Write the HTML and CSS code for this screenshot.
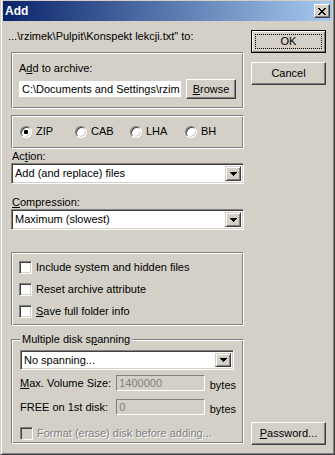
FILE: index.html
```html
<!DOCTYPE html>
<html lang="en">
<head>
  <meta charset="UTF-8">
  <title>Add</title>
  <link rel="stylesheet" href="styles.css">
</head>
<body>

  <div class="window">

    <div class="titlebar">
      <span class="title">Add</span>
      <span class="close">
        <svg width="8" height="7" viewBox="0 0 8 7" shape-rendering="crispEdges">
          <path d="M0 0h2v1h-2z M6 0h2v1h-2z M1 1h2v1h-2z M5 1h2v1h-2z M2 2h4v1h-4z M3 3h2v1h-2z M2 4h4v1h-4z M1 5h2v1h-2z M5 5h2v1h-2z M0 6h2v1h-2z M6 6h2v1h-2z" fill="#000"/>
        </svg>
      </span>
    </div>

    <div class="client">

      <div class="main">
        <div class="path">...\rzimek\Pulpit\Konspekt lekcji.txt" to:</div>

        <!-- Archive name -->
        <div class="group archive">
          <div>A<u>d</u>d to archive:</div>
          <div class="archive-row">
            <div class="edit">C:\Documents and Settings\rzim</div>
            <div class="button browse"><span><u>B</u>rowse</span></div>
          </div>
        </div>

        <!-- Archive type -->
        <div class="group formats">
          <div class="option"><span class="radio checked"></span>ZIP</div>
          <div class="option"><span class="radio"></span>CAB</div>
          <div class="option"><span class="radio"></span>LHA</div>
          <div class="option"><span class="radio"></span>BH</div>
        </div>

        <div class="field-label">Ac<u>t</u>ion:</div>
        <div class="combo">
          <span class="combo-text">Add (and replace) files</span>
          <span class="drop"><svg width="7" height="4" viewBox="0 0 7 4" shape-rendering="crispEdges"><path d="M0 0h7v1h-1v1h-1v1h-1v1h-1v-1h-1v-1h-1v-1h-1z" fill="#000"/></svg></span>
        </div>

        <div class="field-label compression-label"><u>C</u>ompression:</div>
        <div class="combo">
          <span class="combo-text">Maximum (slowest)</span>
          <span class="drop"><svg width="7" height="4" viewBox="0 0 7 4" shape-rendering="crispEdges"><path d="M0 0h7v1h-1v1h-1v1h-1v1h-1v-1h-1v-1h-1v-1h-1z" fill="#000"/></svg></span>
        </div>

        <!-- Options -->
        <div class="group flags">
          <div class="check-row"><span class="checkbox"></span>Include system and hidden files</div>
          <div class="check-row"><span class="checkbox"></span>Reset archive attribute</div>
          <div class="check-row"><span class="checkbox"></span><span><u>S</u>ave full folder info</span></div>
        </div>

        <!-- Disk spanning -->
        <div class="group spanning">
          <div class="legend">Multiple disk s<u>p</u>anning</div>
          <div class="combo small">
            <span class="combo-text">No spanning...</span>
            <span class="drop"><svg width="7" height="4" viewBox="0 0 7 4" shape-rendering="crispEdges"><path d="M0 0h7v1h-1v1h-1v1h-1v1h-1v-1h-1v-1h-1v-1h-1z" fill="#000"/></svg></span>
          </div>
          <div class="size-row first">
            <span class="size-label"><u>M</u>ax. Volume Size:</span>
            <span class="edit disabled">1400000</span>
            <span class="unit">bytes</span>
          </div>
          <div class="size-row">
            <span class="size-label">FREE on 1st disk:</span>
            <span class="edit disabled">0</span>
            <span class="unit">bytes</span>
          </div>
          <div class="check-row format">
            <span class="checkbox disabled"></span>
            <span class="disabled-text">Format (erase) disk before adding...</span>
          </div>
        </div>
      </div>

      <div class="side">
        <div class="button default"><span class="focus">OK</span></div>
        <div class="button cancel">Cancel</div>
        <div class="button password"><span><u>P</u>assword...</span></div>
      </div>

    </div>
  </div>

</body>
</html>
```

FILE: styles.css
```css
/* Reset */
* {
  margin: 0;
  padding: 0;
  box-sizing: border-box;
}

body {
  background: #d4d0c8;
  color: #000;
  font-family: 'Liberation Sans', Arial, sans-serif;
  font-size: 11px;
  line-height: 13px;
}

u {
  text-underline-offset: 1px;
}

/* Window frame */
.window {
  width: 335px;
  height: 455px;
  display: flex;
  flex-direction: column;
  padding: 1px 2px 2px 2px;
  border: 1px solid;
  border-top: 0;
  border-color: #d4d0c8 #404040 #404040 #d4d0c8;
  box-shadow: inset 1px 0 #fff, inset -1px -1px #808080;
}

.titlebar {
  height: 20px;
  flex-shrink: 0;
  display: flex;
  align-items: center;
  justify-content: space-between;
  padding: 0 2px;
  background: linear-gradient(to right, #0a246a, #a6caf0);
  color: #fff;
  font-weight: bold;
  font-size: 12px;
}

.close {
  width: 16px;
  height: 14px;
  display: flex;
  align-items: center;
  justify-content: center;
  background: #d4d0c8;
  border: 1px solid;
  border-color: #fff #404040 #404040 #fff;
  box-shadow: inset -1px -1px #808080;
}

.client {
  flex: 1;
  display: flex;
  padding: 9px 6px 7px 5px;
}

.main {
  width: 236px;
  display: flex;
  flex-direction: column;
}

.main > *,
.spanning > * {
  flex-shrink: 0;
}

.side {
  width: 75px;
  margin-left: 7px;
  display: flex;
  flex-direction: column;
}

/* Etched group boxes */
.group {
  width: 233px;
  margin-left: 3px;
  border: 1px solid;
  border-color: #808080 #fff #fff #808080;
  box-shadow: inset 1px 1px #fff, inset -1px -1px #808080;
}

.archive {
  margin-top: 9px;
  padding: 9px 4px 9px 7px;
}

.archive-row {
  display: flex;
  align-items: center;
  gap: 5px;
  margin-top: 4px;
}

.edit {
  width: 162px;
  height: 16px;
  line-height: 16px;
  padding-left: 3px;
  background: #fff;
  white-space: nowrap;
  overflow: hidden;
}

.edit.disabled {
  width: 90px;
  padding-left: 2px;
  line-height: 14px;
  background: #d4d0c8;
  color: #808080;
  border: 1px solid;
  border-color: #808080 #fff #fff #808080;
}

/* Push buttons */
.button {
  height: 23px;
  flex-shrink: 0;
  display: flex;
  align-items: center;
  justify-content: center;
  background: #d4d0c8;
  border: 1px solid;
  border-color: #fff #404040 #404040 #fff;
  box-shadow: inset -1px -1px #808080;
}

.browse {
  width: 50px;
  height: 20px;
}

.default {
  padding: 3px;
  border-color: #000;
  box-shadow: inset 1px 1px #fff, inset -1px -1px #808080;
}

.focus {
  width: 100%;
  height: 100%;
  display: flex;
  align-items: center;
  justify-content: center;
  border: 1px dotted #000;
}

.cancel {
  margin-top: 9px;
}

.password {
  margin-top: auto;
}

/* Radio buttons */
.formats {
  margin-top: 6px;
  padding: 9px 0 10px 8px;
  display: flex;
}

.option {
  width: 55px;
  height: 13px;
  display: flex;
  align-items: center;
  gap: 4px;
}

.radio {
  width: 12px;
  height: 12px;
  flex-shrink: 0;
  border-radius: 50%;
  background: #fff;
  border: 1px solid;
  border-color: #808080 #fff #fff #808080;
  box-shadow: inset 1px 1px #404040, inset -1px -1px #d4d0c8;
}

.radio.checked {
  background: radial-gradient(circle at center, #000 0 2px, #fff 2.5px);
}

/* Combo boxes */
.field-label {
  margin: 1px 0 0 4px;
}

.compression-label {
  margin-top: 12px;
}

.combo {
  width: 233px;
  height: 21px;
  margin-left: 3px;
  display: flex;
  align-items: center;
  padding: 2px;
  background: #fff;
  border: 1px solid;
  border-color: #808080 #fff #fff #808080;
  box-shadow: inset 1px 1px #404040, inset -1px -1px #d4d0c8;
}

.combo-text {
  flex: 1;
  padding-left: 1px;
}

.drop {
  width: 16px;
  height: 100%;
  display: flex;
  align-items: center;
  justify-content: center;
  background: #d4d0c8;
  border: 1px solid;
  border-color: #d4d0c8 #404040 #404040 #d4d0c8;
  box-shadow: inset 1px 1px #fff, inset -1px -1px #808080;
}

.combo.small {
  width: 214px;
  height: 20px;
  margin: 4px 0 0 0;
}

/* Check boxes */
.flags {
  margin-top: 22px;
  padding: 8px 0 7px 7px;
  display: flex;
  flex-direction: column;
  gap: 9px;
}

.check-row {
  height: 13px;
  display: flex;
  align-items: center;
  gap: 4px;
}

.checkbox {
  width: 13px;
  height: 13px;
  flex-shrink: 0;
  background: #fff;
  border: 1px solid;
  border-color: #808080 #fff #fff #808080;
  box-shadow: inset 1px 1px #404040, inset -1px -1px #d4d0c8;
}

.checkbox.disabled {
  background: #d4d0c8;
}

/* Disk spanning */
.spanning {
  margin-top: 13px;
  padding: 0 7px 3px 8px;
  display: flex;
  flex-direction: column;
}

.legend {
  align-self: flex-start;
  margin-top: -7px;
  padding: 0 2px;
  background: #d4d0c8;
}

.size-row {
  height: 16px;
  display: flex;
  align-items: center;
  margin-top: 8px;
}

.size-row.first {
  margin-top: 5px;
}

.size-label {
  width: 98px;
}

.unit {
  margin-left: 5px;
  padding-top: 4px;
}

.format {
  margin-top: 12px;
}

.disabled-text {
  color: #808080;
  text-shadow: 1px 1px #fff;
}
```
